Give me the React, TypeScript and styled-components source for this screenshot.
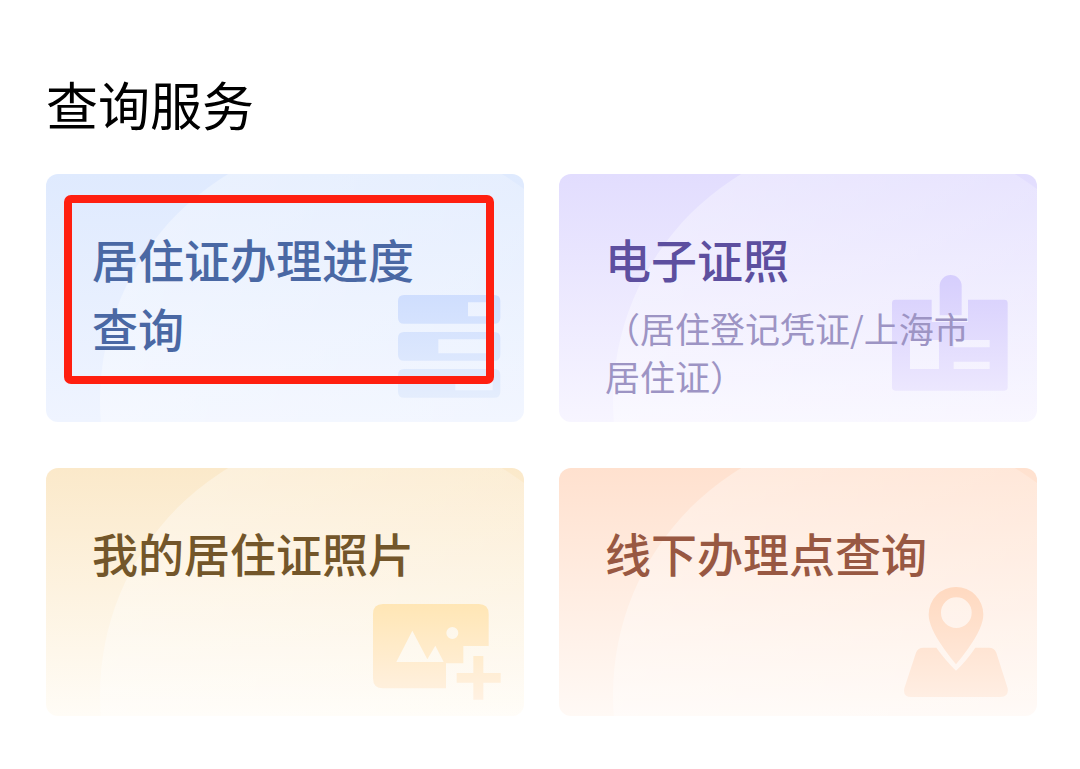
import React from "react";
import styled, { createGlobalStyle } from "styled-components";

const GlobalStyle = createGlobalStyle`
  * { box-sizing: border-box; }
  body {
    margin: 0;
    background: #fff;
    font-family: "Noto Sans CJK SC", "Noto Sans", sans-serif;
  }
`;

const Page = styled.main`
  padding: 69px 43px 53px 46px;
`;

const Heading = styled.h1`
  margin: 0 0 35px;
  font-size: 52px;
  line-height: 70px;
  font-weight: 400;
  color: #000;
`;

const Grid = styled.nav`
  display: grid;
  grid-template-columns: 1fr 1fr;
  gap: 46px 35px;
`;

const Card = styled.a<{ $from: string; $to: string }>`
  position: relative;
  display: block;
  min-height: 248px;
  padding: 50px 46px 20px;
  border-radius: 12px;
  overflow: hidden;
  text-decoration: none;
  background: linear-gradient(${(p) => p.$from}, ${(p) => p.$to});

  &::before {
    content: "";
    position: absolute;
    top: -38px;
    left: 54px;
    width: 530px;
    height: 530px;
    border-radius: 50%;
    background: linear-gradient(
      100deg,
      rgba(255, 255, 255, 0.38),
      rgba(255, 255, 255, 0.18) 80%
    );
  }
`;

const CardTitle = styled.h2<{ $color: string }>`
  position: relative;
  max-width: 7em;
  margin: 0;
  font-size: 46px;
  line-height: 69px;
  font-weight: 500;
  color: ${(p) => p.$color};
`;

const CardNote = styled.p`
  position: relative;
  margin: 11px 0 0;
  font-size: 35px;
  line-height: 48px;
  color: #9d94c4;
`;

const Art = styled.svg<{ $right: number; $bottom: number }>`
  position: absolute;
  right: ${(p) => p.$right}px;
  bottom: ${(p) => p.$bottom}px;
`;

const Highlight = styled.span`
  position: absolute;
  inset: 21px 30px 38px 18px;
  border: 8px solid #ff1f10;
  border-radius: 7px;
`;

const Fade = ({ id, from, to }: { id: string; from: string; to: string }) => (
  <defs>
    <linearGradient id={id} x1="0" y1="0" x2="0" y2="1">
      <stop offset="0" stopColor={from} />
      <stop offset="1" stopColor={to} />
    </linearGradient>
  </defs>
);

const ProgressArt = () => (
  <Art $right={23} $bottom={24} width="103" height="103" viewBox="0 0 309 309" aria-hidden="true">
    <Fade id="progress" from="#cfdefe" to="#e4edfd" />
    <path
      fill="url(#progress)"
      fillRule="evenodd"
      d="M18 0H289Q307 0 307 18V68Q307 86 289 86H18Q0 86 0 68V18Q0 0 18 0ZM210 22V64H284V22Z
         M18 111H289Q307 111 307 129V179Q307 197 289 197H18Q0 197 0 179V129Q0 111 18 111ZM121 133V175H284V133Z
         M18 222H289Q307 222 307 240V290Q307 308 289 308H18Q0 308 0 290V240Q0 222 18 222ZM172 244V286H284V244Z"
    />
  </Art>
);

const LicenseArt = () => (
  <Art $right={29} $bottom={31} width="116" height="116" viewBox="0 0 348 348" aria-hidden="true">
    <Fade id="license" from="#d6cefd" to="#ece7fe" />
    <path
      fill="url(#license)"
      fillRule="evenodd"
      d="M143 121V33a33 33 0 0 1 66 0V121Z
         M10 74H119V141H228V74H337Q347 74 347 84V337Q347 347 337 347H10Q0 347 0 337V84Q0 74 10 74Z
         M54 195V282H141V195ZM185 195V217H293V195ZM185 260V282H293V260Z"
    />
  </Art>
);

const PhotoArt = () => (
  <Art $right={23} $bottom={16} width="128" height="96" viewBox="0 0 384 288" aria-hidden="true">
    <Fade id="photo" from="#ffe6b5" to="#fff1e2" />
    <path
      fill="url(#photo)"
      fillRule="evenodd"
      d="M30 0H317Q347 0 347 30V126H271V178H219V253H30Q0 253 0 223V30Q0 0 30 0Z
         M70 174H212L187 125L163 166L118 80Z
         M220 87a18 18 0 1 0 36 0a18 18 0 1 0 -36 0Z
         M301 156H331V207H383V236H331V287H301V236H251V207H301Z"
    />
  </Art>
);

const PlaceArt = () => (
  <Art $right={29} $bottom={19} width="104" height="110" viewBox="0 0 312 330" aria-hidden="true">
    <Fade id="place" from="#ffd9c0" to="#ffeee3" />
    <path
      fill="url(#place)"
      fillRule="evenodd"
      d="M156 232Q137 209 120 185Q74 122 74 82A82 82 0 0 1 238 82Q238 122 192 185Q175 209 156 232Z
         M111 77a46 46 0 1 0 92 0a46 46 0 1 0 -92 0Z
         M58 182H97Q126 222 156 251Q187 222 214 182H255Q271 182 277 197L311 304Q315 330 290 330H22Q-4 330 1 304L36 197Q42 182 58 182Z"
    />
  </Art>
);

export default function App() {
  return (
    <>
      <GlobalStyle />
      <Page>
        <Heading>查询服务</Heading>
        <Grid aria-label="查询服务">
          <Card href="#progress" $from="#dfeafe" $to="#eff4ff">
            <ProgressArt />
            <CardTitle $color="#4a68a4">居住证办理进度查询</CardTitle>
            <Highlight />
          </Card>
          <Card href="#license" $from="#e2ddfe" $to="#f7f5ff">
            <LicenseArt />
            <CardTitle $color="#5d4f9f">电子证照</CardTitle>
            <CardNote>（居住登记凭证/上海市居住证）</CardNote>
          </Card>
          <Card href="#photo" $from="#fbe9ca" $to="#fffcf6">
            <PhotoArt />
            <CardTitle $color="#73562a">我的居住证照片</CardTitle>
          </Card>
          <Card href="#place" $from="#ffe1cf" $to="#fff9f5">
            <PlaceArt />
            <CardTitle $color="#985842">线下办理点查询</CardTitle>
          </Card>
        </Grid>
      </Page>
    </>
  );
}
